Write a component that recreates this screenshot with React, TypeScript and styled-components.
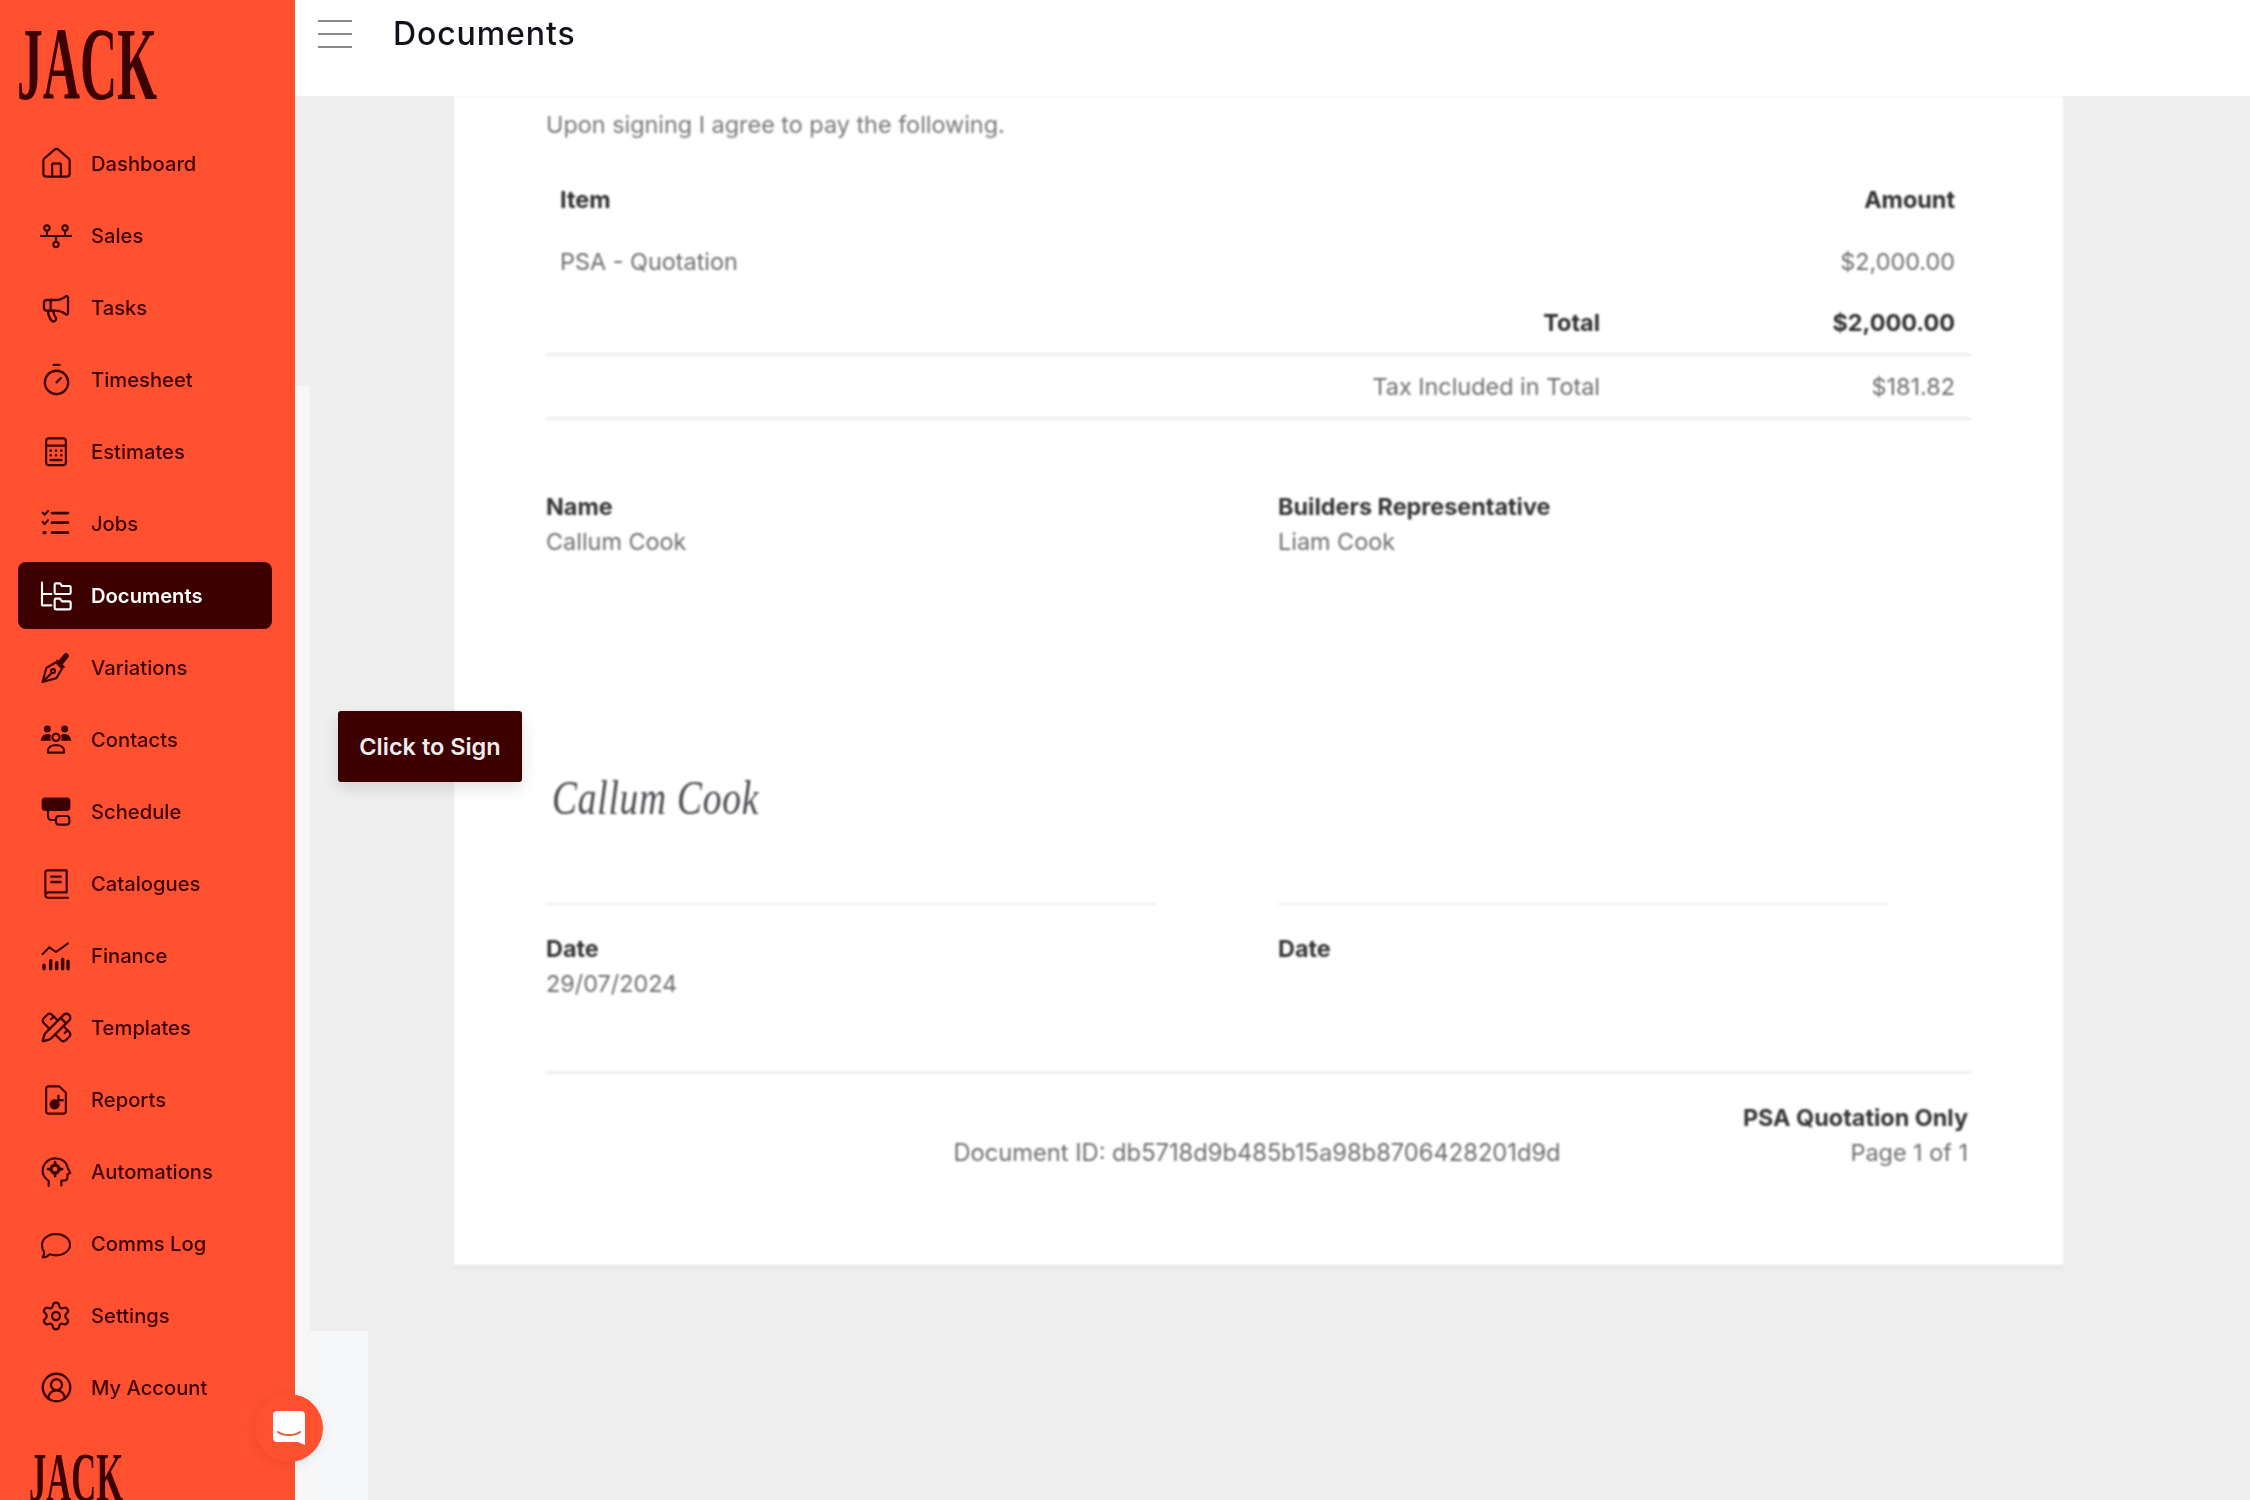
import React from "react";
import styled, { createGlobalStyle } from "styled-components";
import { House, Megaphone, Timer, PencilRuler, Settings, CircleUserRound } from "lucide-react";

const Global = createGlobalStyle`
  html, body { margin: 0; padding: 0; height: 100%; background: #efefef; }
  body { font-family: Inter, "Liberation Sans", sans-serif; overflow: hidden; }
`;

const Shell = styled.div`
  position: relative;
  display: grid;
  grid-template-columns: 295px 1fr;
  height: 1500px;
  overflow: hidden;
  background: #efefef;
`;

const Sidebar = styled.aside`
  background: #ff5030;
  display: flex;
  flex-direction: column;
  height: 1500px;
  overflow: hidden;
`;

const LogoBox = styled.div<{ $h: number; $pl: number; $pt: number }>`
  height: ${p => p.$h}px;
  padding: ${p => p.$pt}px 0 0 ${p => p.$pl}px;
  box-sizing: border-box;
  flex: none;
`;

const Logo = styled.div<{ $size: number }>`
  font-family: "Liberation Serif", serif;
  font-weight: 700;
  font-size: ${p => p.$size}px;
  line-height: 1;
  color: #3d0000;
  transform: scaleX(0.495);
  transform-origin: 0 0;
  white-space: nowrap;
`;

const Nav = styled.nav`
  display: flex;
  flex-direction: column;
  gap: 5px;
  padding: 0 23px 0 18px;
  flex: none;
`;

const NavItem = styled.a<{ $active?: boolean }>`
  display: flex;
  align-items: center;
  gap: 19px;
  height: 67px;
  padding-left: 22px;
  border-radius: 8px;
  font-size: 20.2px;
  font-weight: ${p => (p.$active ? 600 : 500)};
  color: ${p => (p.$active ? "#fff" : "#3d0000")};
  background: ${p => (p.$active ? "#3d0000" : "transparent")};
`;

const NavLabel = styled.span`
  filter: blur(0.35px);
`;

const IconBox = styled.span`
  width: 32px;
  height: 32px;
  flex: none;
  display: flex;
  align-items: center;
  justify-content: center;
  filter: blur(0.3px);
  svg { display: block; flex: none; }
`;

const Column = styled.div`
  display: flex;
  flex-direction: column;
  min-width: 0;
`;

const Header = styled.header`
  height: 96px;
  background: #fff;
  display: flex;
  align-items: flex-start;
  gap: 41px;
  padding: 20px 0 0 23px;
  box-sizing: border-box;
  flex: none;
`;

const Burger = styled.div`
  width: 34px;
  height: 28px;
  display: flex;
  flex-direction: column;
  justify-content: space-between;
  span { display: block; height: 2px; background: #8a8a8a; }
`;

const Title = styled.h1`
  margin: -9px 0 0;
  font-size: 32px;
  line-height: 46px;
  font-weight: 500;
  letter-spacing: 0.9px;
  color: #15101a;
  filter: blur(0.5px);
`;

const Canvas = styled.main`
  flex: 1;
  padding-left: 159px;
`;

const Page = styled.section`
  width: 1609px;
  height: 1169px;
  box-sizing: border-box;
  background: #fff;
  box-shadow: 0 4px 4px rgba(0, 0, 0, 0.04);
  padding: 14px 92px 0 92px;
  color: #6e6e6e;
  font-size: 23.4px;
  filter: blur(0.9px);
`;

const Intro = styled.p`
  margin: 0 0 28px;
  line-height: 30px;
  font-size: 23.4px;
  color: #777;
`;

const Row = styled.div<{ $rule?: boolean; $h?: number }>`
  display: grid;
  grid-template-columns: 1fr 355px;
  align-items: center;
  height: ${p => p.$h ?? 62}px;
  padding: 0 16px 0 14px;
  box-sizing: border-box;
  border-bottom: ${p => (p.$rule ? "3px solid #eeeeee" : "none")};
`;

const Cell = styled.div<{ $right?: boolean; $bold?: boolean }>`
  text-align: ${p => (p.$right ? "right" : "left")};
  font-weight: ${p => (p.$bold ? 700 : 400)};
  color: ${p => (p.$bold ? "#303030" : "#6e6e6e")};
`;

const Signers = styled.div`
  display: grid;
  grid-template-columns: 610px 610px;
  column-gap: 122px;
  padding-top: 69px;
`;

const Label = styled.div`
  font-weight: 700;
  line-height: 35px;
  color: #353535;
`;

const Value = styled.div`
  line-height: 35px;
  min-height: 35px;
  color: #6e6e6e;
`;

const SignArea = styled.div`
  height: 346px;
  box-sizing: border-box;
  border-bottom: 2px solid #eeeeee;
  margin-bottom: 26px;
  padding: 209px 0 0 6px;
`;

const Signature = styled.div`
  font-family: "Liberation Serif", serif;
  font-style: italic;
  font-size: 48px;
  line-height: 60px;
  letter-spacing: 1px;
  color: #4a4a50;
  white-space: nowrap;
  transform: scaleX(0.78);
  transform-origin: 0 100%;
`;

const Footer = styled.div`
  margin-top: 70px;
  border-top: 3px solid #eeeeee;
  padding: 26px 3px 0 0;
  display: grid;
  grid-template-columns: 1fr auto 1fr;
  align-items: end;
`;

const DocId = styled.div`
  grid-column: 2;
  line-height: 35px;
  color: #6e6e6e;
  font-size: 23.7px;
`;

const FooterRight = styled.div`
  grid-column: 3;
  text-align: right;
`;

const SignButton = styled.button`
  position: absolute;
  left: 338px;
  top: 711px;
  width: 184px;
  height: 71px;
  border: none;
  border-radius: 3px;
  background: #3d0000;
  color: #eee;
  font: 600 23.5px Inter, "Liberation Sans", sans-serif;
  box-shadow: 0 6px 16px rgba(0, 0, 0, 0.12);
`;

const EdgeStrip = styled.div<{ $l: number; $t: number; $w: number; $h: number; $c: string }>`
  position: absolute;
  left: ${p => p.$l}px;
  top: ${p => p.$t}px;
  width: ${p => p.$w}px;
  height: ${p => p.$h}px;
  background: ${p => p.$c};
`;

const ChatBubble = styled.div`
  position: absolute;
  left: 255px;
  top: 1394px;
  width: 68px;
  height: 68px;
  border-radius: 50%;
  background: #ff5030;
  box-shadow: 0 2px 12px rgba(0, 0, 0, 0.08);
  display: flex;
  align-items: center;
  justify-content: center;
`;

const I = ({ children }: { children: React.ReactNode }) => (
  <svg width="32" height="32" viewBox="0 0 24 24" fill="none" stroke="currentColor" strokeWidth="1.6" strokeLinecap="round" strokeLinejoin="round">
    {children}
  </svg>
);

const lucide = { size: 35, strokeWidth: 1.55 };

const Sales = () => (
  <I>
    <path d="M0.5 12h23" />
    <circle cx="5.2" cy="6" r="2" />
    <circle cx="18.8" cy="6" r="2" />
    <circle cx="12" cy="18.4" r="2" />
    <path d="M5.2 8v4M18.8 8v4M12 12v4.4" />
  </I>
);
const Estimates = () => (
  <I>
    <rect x="4.6" y="1.8" width="14.8" height="20" rx="2" />
    <path d="M4.6 7.2h14.8" />
    <path d="M8 11h.01M12 11h.01M16 11h.01M8 14.5h.01M12 14.5h.01M16 14.5h.01M8 18h8" strokeWidth="2" />
  </I>
);
const Jobs = () => (
  <I>
    <path d="M2 3.5l1.5 1.500L6 2.200M2 10.500L3.500 12 6 9.200" />
    <path d="M3 18.500h.8" strokeWidth="2.400" />
    <path d="M9 3.800h12M9 11h12M9 18.500h12" strokeWidth="2" />
  </I>
);
const Documents = () => (
  <I>
    <path d="M1.500 2v17h7M1.500 10.500h7" />
    <path d="M11 3.500c0-.6.4-1 1-1h3l1.500 2h5.500c.6 0 1 .4 1 1v4c0 .6-.4 1-1 1H12c-.6 0-1-.4-1-1z" />
    <path d="M11 15c0-.6.4-1 1-1h3l1.500 2h5.500c.6 0 1 .4 1 1v4c0 .6-.4 1-1 1H12c-.6 0-1-.4-1-1z" />
  </I>
);
const Variations = () => (
  <I>
    <path d="M2 22.500l2.700-10.500 7.300-4.300 4.600 4.600-4.300 7.300z" />
    <path d="M2 22.500l6.500-6.500" />
    <circle cx="9.800" cy="14.300" r="1.500" />
    <path d="M13 6.500l4.800 4.800" />
    <path d="M15.500 7.800L19.500 3" strokeWidth="4.200" />
  </I>
);
const Contacts = () => (
  <I>
    <circle cx="5.500" cy="3.800" r="2.600" fill="currentColor" stroke="none" />
    <circle cx="18.500" cy="3.800" r="2.600" fill="currentColor" stroke="none" />
    <path d="M0.500 12.500c.5-3.500 2.500-5 5-5 1.200 0 2 .3 2.800.9-.6 1-.8 2.600.2 4.100zM23.500 12.500c-.5-3.500-2.500-5-5-5-1.200 0-2 .3-2.800.9.6 1 .8 2.600-.2 4.100z" fill="currentColor" stroke="none" />
    <circle cx="12" cy="10" r="2.700" />
    <path d="M6 21.500v-1.500c0-2.500 2.500-4.200 6-4.200s6 1.700 6 4.200v1.500z" />
  </I>
);
const Schedule = () => (
  <I>
    <rect x="2" y="2" width="20" height="8.500" rx="2" fill="currentColor" />
    <path d="M6 10.500v4.500c0 2 1 3 3 3h3" />
    <rect x="12" y="15" width="10" height="6.500" rx="2.200" />
  </I>
);
const Catalogues = () => (
  <I>
    <path d="M4 18.500V3.500C4 2.500 4.800 1.800 5.800 1.800H20v16.500H6.200C4.900 18.300 4 19.100 4 20.300s.9 2 2.200 2H21" />
    <path d="M8.500 6.500h7M8.500 10.500h7" strokeWidth="1.800" />
  </I>
);
const Finance = () => (
  <I>
    <path d="M2 10.500l5-5 5 3.500 9-6.500" />
    <path d="M3 19v2.500M8 15.500v6M12.500 17v4.500M17 14.500v7M21 16v5.500" strokeWidth="2.600" />
  </I>
);
const Reports = () => (
  <I>
    <path d="M14.500 1.800H6.600c-1.200 0-2 .8-2 2v16.400c0 1.200.8 2 2 2h10.800c1.200 0 2-.8 2-2V6.500z" />
    <circle cx="11" cy="15.300" r="3.800" fill="currentColor" stroke="none" />
    <path d="M13.800 8.800v3.400h3.200" strokeWidth="1.800" />
  </I>
);
const Automations = () => (
  <I>
    <path d="M6.500 22.500v-3.800C3.700 16.800 2 14.500 2 11.300 2 5.700 6.300 1.800 11.500 1.800c4.800 0 8.500 2.700 9.300 7.200l1.900 3.700-2.100.9v2.400c0 1.700-1 2.500-2.500 2.500h-2.100v3.700" />
    <circle cx="11.300" cy="9.800" r="3" strokeWidth="2.400" />
    <path d="M11.300 4.500v1.800M11.300 13.300v1.800M6 9.800h1.800M14.800 9.800h1.800" strokeWidth="2" />
  </I>
);
const Comms = () => (
  <I>
    <path d="M2 22c1-1.500 1.300-2.800 1-4.200C1.800 16.500 1.500 14.800 1.500 13c0-5 4.700-8.500 10.500-8.500S22.500 8 22.500 12.500 17.800 20.500 12 20.500c-1.800 0-3.300-.3-4.700-.9C5.900 21 4 22 2 22z" />
  </I>
);

const items: { label: string; icon: React.ReactNode; active?: boolean }[] = [
  { label: "Dashboard", icon: <House {...lucide} /> },
  { label: "Sales", icon: <Sales /> },
  { label: "Tasks", icon: <Megaphone size={32} strokeWidth={1.7} /> },
  { label: "Timesheet", icon: <Timer {...lucide} /> },
  { label: "Estimates", icon: <Estimates /> },
  { label: "Jobs", icon: <Jobs /> },
  { label: "Documents", icon: <Documents />, active: true },
  { label: "Variations", icon: <Variations /> },
  { label: "Contacts", icon: <Contacts /> },
  { label: "Schedule", icon: <Schedule /> },
  { label: "Catalogues", icon: <Catalogues /> },
  { label: "Finance", icon: <Finance /> },
  { label: "Templates", icon: <PencilRuler size={33} strokeWidth={1.7} /> },
  { label: "Reports", icon: <Reports /> },
  { label: "Automations", icon: <Automations /> },
  { label: "Comms Log", icon: <Comms /> },
  { label: "Settings", icon: <Settings size={32} strokeWidth={1.7} /> },
  { label: "My Account", icon: <CircleUserRound size={33} strokeWidth={1.7} /> },
];

export default function App() {
  return (
    <Shell>
      <Global />
      <Sidebar>
        <LogoBox $h={130} $pl={17} $pt={12}>
          <Logo $size={104}>JACK</Logo>
        </LogoBox>
        <Nav>
          {items.map(it => (
            <NavItem key={it.label} $active={it.active}>
              <IconBox>{it.icon}</IconBox>
              <NavLabel>{it.label}</NavLabel>
            </NavItem>
          ))}
        </Nav>
        <LogoBox $h={60} $pl={29} $pt={22}>
          <Logo $size={70}>JACK</Logo>
        </LogoBox>
      </Sidebar>
      <Column>
        <Header>
          <Burger><span /><span /><span /></Burger>
          <Title>Documents</Title>
        </Header>
        <Canvas>
          <Page>
            <Intro>Upon signing I agree to pay the following.</Intro>
            <Row>
              <Cell $bold>Item</Cell>
              <Cell $right $bold>Amount</Cell>
            </Row>
            <Row>
              <Cell>PSA - Quotation</Cell>
              <Cell $right>$2,000.00</Cell>
            </Row>
            <Row $rule $h={64}>
              <Cell $right $bold>Total</Cell>
              <Cell $right $bold>$2,000.00</Cell>
            </Row>
            <Row $rule $h={64}>
              <Cell $right>Tax Included in Total</Cell>
              <Cell $right>$181.82</Cell>
            </Row>
            <Signers>
              <div>
                <Label>Name</Label>
                <Value>Callum Cook</Value>
                <SignArea><Signature>Callum Cook</Signature></SignArea>
                <Label>Date</Label>
                <Value>29/07/2024</Value>
              </div>
              <div>
                <Label>Builders Representative</Label>
                <Value>Liam Cook</Value>
                <SignArea />
                <Label>Date</Label>
                <Value />
              </div>
            </Signers>
            <Footer>
              <DocId>Document ID: db5718d9b485b15a98b8706428201d9d</DocId>
              <FooterRight>
                <Label>PSA Quotation Only</Label>
                <Value>Page 1 of 1</Value>
              </FooterRight>
            </Footer>
          </Page>
        </Canvas>
      </Column>
      <EdgeStrip $l={295} $t={386} $w={15} $h={1114} $c="#f6f6f6" />
      <EdgeStrip $l={310} $t={1331} $w={58} $h={169} $c="#f6f7f8" />
      <SignButton>Click to Sign</SignButton>
      <ChatBubble>
        <svg width="34" height="36" viewBox="0 0 34 36">
          <path d="M5 1h24c2.500 0 4 1.500 4 4v30l-7-3H5c-2.500 0-4-1.500-4-4V5c0-2.500 1.500-4 4-4z" fill="#fff" />
          <path d="M6 22c6 4 16 4 22 0" fill="none" stroke="#ff5030" strokeWidth="2" strokeLinecap="round" />
        </svg>
      </ChatBubble>
    </Shell>
  );
}
